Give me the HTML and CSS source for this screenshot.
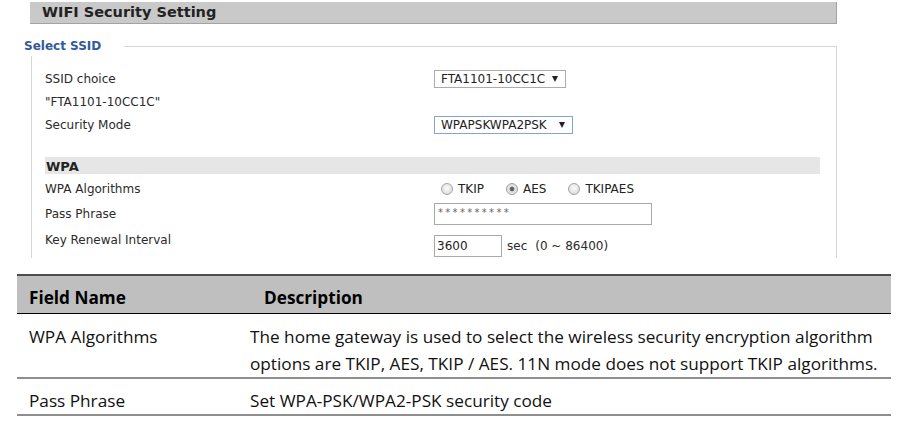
FILE: index.html
```html
<!DOCTYPE html>
<html lang="en">
<head>
<meta charset="utf-8">
<title>WIFI Security Setting</title>
<link rel="stylesheet" href="styles.css">
</head>
<body>
<div class="wifi">
  <div class="title-bar">WIFI Security Setting</div>
  <div class="legend-row">
    <span class="legend">Select SSID</span>
    <span class="legend-line"></span>
  </div>
  <div class="fs-body">
    <div class="row r1">
      <div class="label">SSID choice</div>
      <div class="select s1"><span>FTA1101-10CC1C</span><span class="arrow"></span></div>
    </div>
    <div class="row r2">
      <div class="label">"FTA1101-10CC1C"</div>
    </div>
    <div class="row r3">
      <div class="label">Security Mode</div>
      <div class="select s2"><span>WPAPSKWPA2PSK</span><span class="arrow"></span></div>
    </div>
    <div class="wpa-bar">WPA</div>
    <div class="row r5">
      <div class="label">WPA Algorithms</div>
      <div class="radios">
        <span class="opt"><span class="radio"></span>TKIP</span>
        <span class="opt"><span class="radio on"></span>AES</span>
        <span class="opt"><span class="radio"></span>TKIPAES</span>
      </div>
    </div>
    <div class="row r6">
      <div class="label">Pass Phrase</div>
      <div class="input pass"><span class="stars">**********</span></div>
    </div>
    <div class="row r7">
      <div class="label">Key Renewal Interval</div>
      <div class="ctrl">
        <div class="input key">3600</div>
        <span class="sec">sec</span>
        <span class="range">(0 ~ 86400)</span>
      </div>
    </div>
  </div>
</div>

<div class="doc">
  <div class="doc-head">
    <div class="c1">Field Name</div>
    <div class="c2">Description</div>
  </div>
  <div class="doc-row first">
    <div class="c1">WPA Algorithms</div>
    <div class="c2">The home gateway is used to select the wireless security encryption algorithm<br>options are TKIP, AES, TKIP / AES. 11N mode does not support TKIP algorithms.</div>
  </div>
  <div class="doc-row second">
    <div class="c1">Pass Phrase</div>
    <div class="c2">Set WPA-PSK/WPA2-PSK security code</div>
  </div>
</div>
</body>
</html>
```
FILE: styles.css
```css
* { box-sizing: border-box; }

body {
  margin: 0;
  background: #ffffff;
  font-family: "DejaVu Sans", sans-serif;
  font-size: 12px;
  color: #2a2a2a;
}

.wifi {
  padding-top: 2px;
}

.title-bar {
  margin-left: 30px;
  width: 807px;
  height: 22px;
  background: #c9c9c9;
  border-right: 1px solid #a3a3a3;
  border-bottom: 1px solid #a3a3a3;
  padding-left: 12px;
  font-weight: bold;
  font-size: 14.5px;
  line-height: 21px;
  color: #222;
}

.legend-row {
  display: flex;
  margin-left: 24px;
  margin-top: 14px;
  width: 813px;
  height: 18px;
}

.legend {
  font-weight: bold;
  color: #2f5a9c;
  line-height: 16px;
}

.legend-line {
  flex: 1;
  margin-left: 23px;
  margin-top: 8px;
  border-top: 1px solid #d6d6d6;
  border-right: 1px solid #d6d6d6;
}

.fs-body {
  margin-left: 31px;
  width: 806px;
  height: 202px;
  border-left: 1px solid #d6d6d6;
  border-right: 1px solid #d6d6d6;
  padding-top: 12px;
  padding-left: 13px;
}

.row {
  display: flex;
  align-items: center;
}

.label {
  width: 389px;
  flex: none;
  line-height: 14px;
}

.r1 { height: 22px; }
.r2 { height: 23px; }
.r3 { height: 24px; }
.r5 { height: 26px; margin-top: 2px; }
.r6 { height: 24px; }
.r7 {
  height: 32px;
  align-items: flex-start;
  padding-top: 9px;
}
.r7 .label { margin-top: -2px; }

.select {
  display: flex;
  align-items: center;
  height: 18px;
  border: 1px solid #acacac;
  padding-left: 6px;
  background: #fff;
  color: #222;
}
.s1 { width: 132px; }
.s2 { width: 139px; border-color: #86a3d6; }

.arrow {
  margin-left: auto;
  margin-right: 7px;
  width: 0;
  height: 0;
  border-left: 3.5px solid transparent;
  border-right: 3.5px solid transparent;
  border-top: 6px solid #222;
}

.wpa-bar {
  margin-top: 20px;
  width: 775px;
  height: 17px;
  background: #e6e6e6;
  font-weight: bold;
  font-size: 13px;
  line-height: 19px;
  padding-left: 1px;
  color: #222;
}

.radios {
  display: flex;
  align-items: center;
  gap: 22px;
  margin-left: 7px;
  color: #222;
}

.opt {
  display: flex;
  align-items: center;
  gap: 5px;
}

.radio {
  width: 12px;
  height: 12px;
  border-radius: 50%;
  border: 1px solid #a4a4a4;
  background: radial-gradient(circle at 50% 40%, #fbfbfb 0, #e4e4e4 60%, #d2d2d2 100%);
}
.radio.on {
  background: radial-gradient(circle at 50% 50%, #5a5a5a 0, #6a6a6a 2px, #e6e6e6 2.8px, #d4d4d4 100%);
}

.input {
  height: 22px;
  border: 1px solid #a9a9a9;
  background: #fff;
  color: #222;
}

.pass {
  width: 218px;
  padding-left: 3px;
  line-height: 16px;
}

.stars {
  font-size: 10px;
  letter-spacing: 2.3px;
  color: #666;
}

.ctrl {
  display: flex;
  align-items: center;
}

.key {
  width: 68px;
  padding-left: 2px;
  line-height: 20px;
}

.sec { margin-left: 5px; }
.range { margin-left: 8px; }

/* documentation table */
.doc {
  margin-left: 17px;
  margin-top: 16px;
  width: 874px;
  font-family: "Open Sans", Lato, sans-serif;
  font-size: 17.2px;
  color: #111;
}

.doc-head {
  display: grid;
  grid-template-columns: 233px 1fr;
  background: #bfbfbf;
  border-top: 2px solid #4d4d4d;
  border-bottom: 1px solid #000;
  padding: 12px 0 5px;
  font-weight: bold;
  line-height: 20px;
  color: #000;
}
.doc-head .c1 { padding-left: 12px; }
.doc-head .c2 { padding-left: 14px; }

.doc-row {
  display: grid;
  grid-template-columns: 233px 1fr;
  line-height: 27px;
  border-bottom: 2px solid #8e8e8e;
  white-space: nowrap;
}
.doc-row .c1 { padding-left: 12px; }
.doc-row.first { padding-top: 9px; }
.doc-row.second { padding-top: 8px; }
```
